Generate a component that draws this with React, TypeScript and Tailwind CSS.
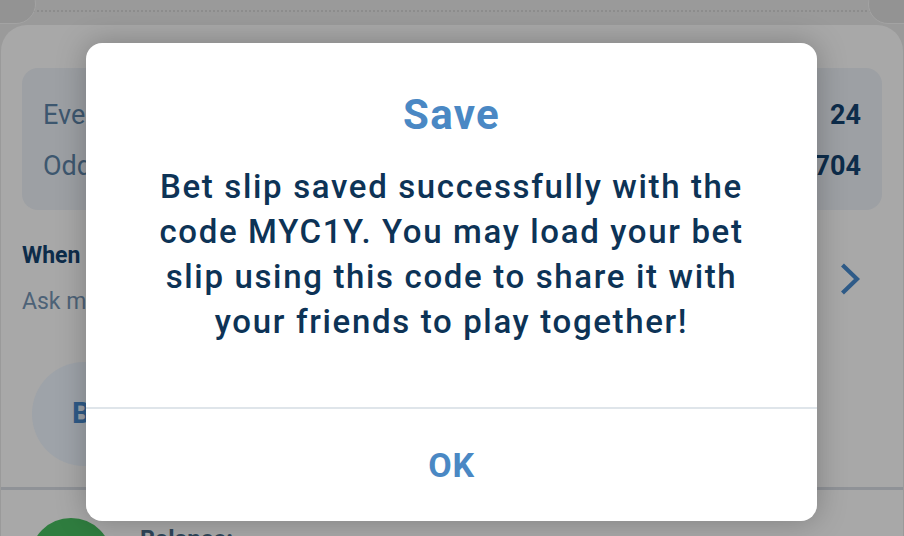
import React from "react";

export default function App() {
  const font = { fontFamily: "Roboto, 'Noto Sans', sans-serif" };
  return (
    <div className="relative w-[904px] h-[536px] overflow-hidden bg-[#9a9a9a]" style={font}>
      {/* ticket top strip */}
      <div className="relative h-[25px] shrink-0">
        <div className="absolute left-[-22px] top-[-16px] w-[58px] h-[40px] rounded-full bg-[#939393] border border-[#a3a3a3]" />
        <div className="absolute right-[-22px] top-[-16px] w-[58px] h-[40px] rounded-full bg-[#939393] border border-[#a3a3a3]" />
        <div className="mx-[22px] pt-[10px]">
          <div className="border-t-2 border-dotted border-[#8c8c8c]" />
        </div>
      </div>
      {/* card */}
      <div className="h-[511px] mx-[1px] rounded-t-[26px] bg-[#a8a8a8] flex flex-col">
        <div className="shrink-0 mx-[21px] mt-[43px] h-[142px] rounded-[16px] bg-[#9da0a4] px-[21px] pt-[3px] flex flex-col justify-center gap-[21px]">
          <div className="flex justify-between items-center text-[27px] leading-[30px]">
            <span className="text-[#3d576f]">Events</span>
            <span className="font-bold text-[#0d2c4a]">24</span>
          </div>
          <div className="flex justify-between items-center text-[27px] leading-[30px]">
            <span className="text-[#3d576f]">Odds</span>
            <span className="font-bold text-[#0d2c4a]">3.704</span>
          </div>
        </div>
        <div className="shrink-0 flex items-center justify-between mx-[21px] mt-[34px]">
          <div className="flex flex-col gap-[22px]">
            <span className="text-[23px] leading-[24px] font-bold text-[#0d2c4a]">When odds change</span>
            <span className="text-[23px] leading-[24px] text-[#4d6277]">Ask me</span>
          </div>
          <svg width="22" height="32" viewBox="0 0 22 32" className="mr-[20px]">
            <path d="M4 3.5 L17 16 L4 28.5" stroke="#2f5b88" strokeWidth="4.2" fill="none" strokeLinecap="square" strokeLinejoin="miter" />
          </svg>
        </div>
        <div className="shrink-0 flex mx-[31px] mt-[48px]">
          <div className="w-[104px] h-[104px] rounded-full bg-[#9ea3a9] flex items-center justify-center text-[29px] font-bold text-[#2f5b88]">
            <span className="ml-[20px]">Bet</span>
          </div>
        </div>
        <div className="shrink-0 mt-[21px] h-[3px] bg-[#8f9297]" />
        <div className="shrink-0 flex items-start mx-[29px] mt-[28px] gap-[28px]">
          <div className="w-[82px] h-[82px] rounded-full bg-[#2f7d3f] shrink-0" />
          <span className="text-[24px] leading-[26px] font-bold text-[#2f4558] mt-[8px]">Balance:</span>
        </div>
      </div>

      {/* modal */}
      <div className="absolute left-[86px] top-[43px] w-[731px] h-[478px] bg-white rounded-[16px] shadow-[0_0_30px_rgba(0,0,0,0.25)] flex flex-col">
        <div className="flex flex-col items-center pt-[47px] h-[364px] shrink-0">
          <div className="text-[42px] leading-[50px] font-bold text-[#4a88c4] tracking-[0.03em]">Save</div>
          <div className="mt-[24px] text-center text-[33px] leading-[45px] font-medium text-[#0d3356] tracking-[0.05em]">
            Bet slip saved successfully with the
            <br />
            code MYC1Y. You may load your bet
            <br />
            slip using this code to share it with
            <br />
            your friends to play together!
          </div>
        </div>
        <div className="h-[2px] bg-[#dfe5ea] shrink-0" />
        <div className="flex-1 flex items-center justify-center text-[34px] font-bold text-[#4a88c4] tracking-[0.02em]">
          OK
        </div>
      </div>
    </div>
  );
}
